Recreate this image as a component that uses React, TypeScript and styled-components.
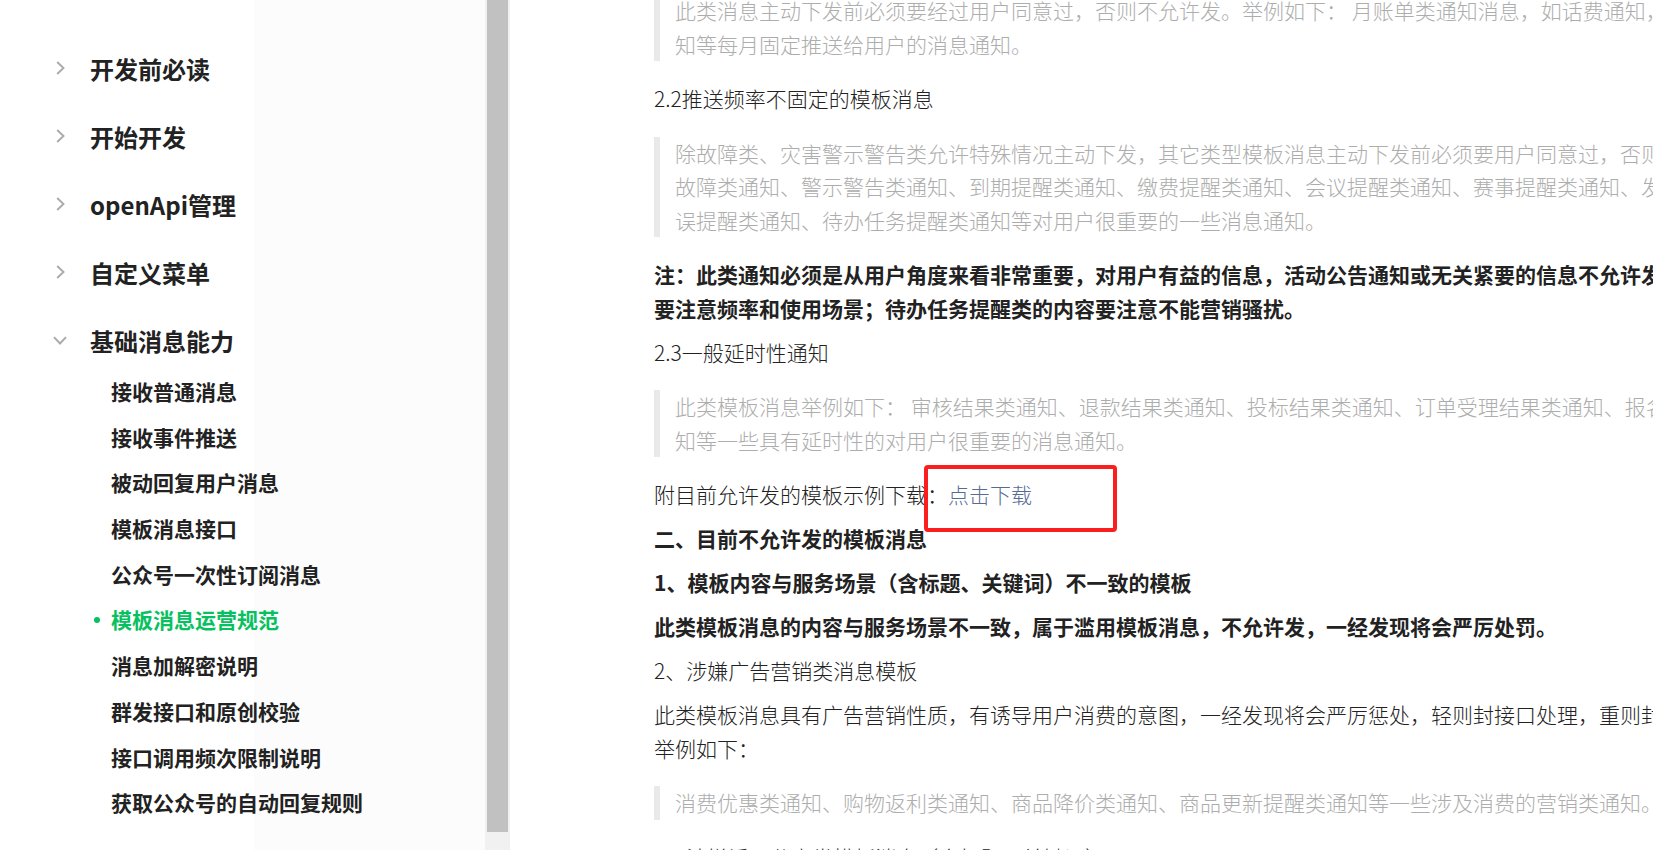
import React from "react";
import styled, { createGlobalStyle } from "styled-components";

const GlobalStyle = createGlobalStyle`
    html, body {
        margin: 0;
        padding: 0;
        height: 100%;
        overflow: hidden;
        background: #ffffff;
    }
    body {
        font-family: "Noto Sans CJK SC", "Noto Sans", "Liberation Sans", sans-serif;
        color: #222222;
    }
`;

interface MenuGroup {
    title: string;
    expanded?: boolean;
    children?: { title: string; active?: boolean }[];
}

const menu: MenuGroup[] = [
    { title: "开发前必读" },
    { title: "开始开发" },
    { title: "openApi管理" },
    { title: "自定义菜单" },
    {
        title: "基础消息能力",
        expanded: true,
        children: [
            { title: "接收普通消息" },
            { title: "接收事件推送" },
            { title: "被动回复用户消息" },
            { title: "模板消息接口" },
            { title: "公众号一次性订阅消息" },
            { title: "模板消息运营规范", active: true },
            { title: "消息加解密说明" },
            { title: "群发接口和原创校验" },
            { title: "接口调用频次限制说明" },
            { title: "获取公众号的自动回复规则" },
        ],
    },
];

const Chevron: React.FC<{ open?: boolean }> = ({ open }) =>
    open ? (
        <svg width="14" height="9" viewBox="0 0 14 9">
            <polyline points="1,1.2 7,7.5 13,1.2" fill="none" stroke="#aaaaaa" strokeWidth="1.9" />
        </svg>
    ) : (
        <svg width="9" height="14" viewBox="0 0 9 14">
            <polyline points="1.2,1 7.5,7 1.2,13" fill="none" stroke="#aaaaaa" strokeWidth="1.9" />
        </svg>
    );

const Sidebar: React.FC = () => (
    <SSidebar>
        <SNav>
            {menu.map(group => (
                <React.Fragment key={group.title}>
                    <STopRow>
                        <SIconBox>
                            <Chevron open={group.expanded} />
                        </SIconBox>
                        <STopTitle>{group.title}</STopTitle>
                    </STopRow>
                    {group.expanded && group.children && (
                        <SSubList>
                            {group.children.map(item => (
                                <SSubItem key={item.title} $active={item.active}>
                                    {item.title}
                                </SSubItem>
                            ))}
                        </SSubList>
                    )}
                </React.Fragment>
            ))}
        </SNav>
        <STrack>
            <SThumb />
        </STrack>
    </SSidebar>
);

const SSidebar = styled.aside`
    width: 510px;
    flex-shrink: 0;
    height: 100%;
    display: flex;
    background: linear-gradient(to right, #ffffff 254px, #fcfcfc 254px);
`;

const SNav = styled.nav`
    flex: 1;
    padding-top: 34px;
    overflow: hidden;
`;

const STopRow = styled.div`
    height: 68px;
    display: flex;
    align-items: center;
    padding-left: 53px;
`;

const SIconBox = styled.span`
    width: 14px;
    display: flex;
    justify-content: center;
    align-items: center;
    margin-right: 23px;
`;

const STopTitle = styled.span`
    font-size: 24px;
    font-weight: 700;
    color: #222222;
    white-space: nowrap;
`;

const SSubList = styled.ul`
    list-style: none;
    margin: -5px 0 0;
    padding: 0;
`;

const SSubItem = styled.li<{ $active?: boolean }>`
    position: relative;
    height: 45.7px;
    line-height: 45.7px;
    padding-left: 111px;
    font-size: 21px;
    font-weight: 700;
    white-space: nowrap;
    color: ${p => (p.$active ? "#07c160" : "#222222")};

    &::before {
        content: "";
        display: ${p => (p.$active ? "block" : "none")};
        position: absolute;
        left: 94px;
        top: 20px;
        width: 6px;
        height: 6px;
        border-radius: 50%;
        background: #07c160;
    }
`;

const STrack = styled.div`
    width: 25px;
    height: 100%;
    background: #f1f1f1;
    display: flex;
    justify-content: center;
`;

const SThumb = styled.div`
    width: 21px;
    height: 832px;
    background: #c1c1c1;
`;

const Article: React.FC = () => (
    <SMain>
        <SArticle>
            <SQuote>
                此类消息主动下发前必须要经过用户同意过，否则不允许发。举例如下： 月账单类通知消息，如话费通知，水电燃气账单通
                <br />
                知等每月固定推送给用户的消息通知。
            </SQuote>
            <SPara>2.2推送频率不固定的模板消息</SPara>
            <SQuote>
                除故障类、灾害警示警告类允许特殊情况主动下发，其它类型模板消息主动下发前必须要用户同意过，否则不允许发。举例如下：
                <br />
                故障类通知、警示警告类通知、到期提醒类通知、缴费提醒类通知、会议提醒类通知、赛事提醒类通知、发货提醒类通知、错
                <br />
                误提醒类通知、待办任务提醒类通知等对用户很重要的一些消息通知。
            </SQuote>
            <SPara $bold>
                注：此类通知必须是从用户角度来看非常重要，对用户有益的信息，活动公告通知或无关紧要的信息不允许发，到期提醒类通知
                <br />
                要注意频率和使用场景；待办任务提醒类的内容要注意不能营销骚扰。
            </SPara>
            <SPara>2.3一般延时性通知</SPara>
            <SQuote>
                此类模板消息举例如下： 审核结果类通知、退款结果类通知、投标结果类通知、订单受理结果类通知、报名结果类通知、审批结果类通
                <br />
                知等一些具有延时性的对用户很重要的消息通知。
            </SQuote>
            <SPara>
                附目前允许发的模板示例下载：<SLink>点击下载</SLink>
                <SMarkBox />
            </SPara>
            <SPara $bold>二、目前不允许发的模板消息</SPara>
            <SPara $bold>1、模板内容与服务场景（含标题、关键词）不一致的模板</SPara>
            <SPara $bold>此类模板消息的内容与服务场景不一致，属于滥用模板消息，不允许发，一经发现将会严厉处罚。</SPara>
            <SPara>2、涉嫌广告营销类消息模板</SPara>
            <SPara>
                此类模板消息具有广告营销性质，有诱导用户消费的意图，一经发现将会严厉惩处，轻则封接口处理，重则封号处理。
                <br />
                举例如下：
            </SPara>
            <SQuote>消费优惠类通知、购物返利类通知、商品降价类通知、商品更新提醒类通知等一些涉及消费的营销类通知。</SQuote>
            <SPara>3、涉嫌诱导分享类模板消息（含标题、关键词）</SPara>
        </SArticle>
    </SMain>
);

const SMain = styled.main`
    flex: 1;
    height: 100%;
    overflow: hidden;
    background: #ffffff;
`;

const SArticle = styled.article`
    display: flow-root;
    margin-top: -6px;
    padding-left: 144px;
    font-size: 21px;
    line-height: 33.5px;
    font-weight: 300;
    white-space: nowrap;

    & > :first-child {
        margin-top: 0;
    }
`;

const SPara = styled.p<{ $bold?: boolean }>`
    position: relative;
    margin: 0 0 10.5px;
    color: #222222;
    font-weight: ${p => (p.$bold ? 700 : 300)};
`;

const SQuote = styled.blockquote`
    margin: 21px 0;
    padding-left: 15px;
    border-left: 6px solid #e9e9e9;
    color: #adadad;
`;

const SLink = styled.a`
    color: #576b95;
    text-decoration: none;
    cursor: pointer;
`;

const SMarkBox = styled.span`
    position: absolute;
    left: 270px;
    top: -13px;
    width: 193px;
    height: 67px;
    box-sizing: border-box;
    border: 4px solid #fa1e1e;
    border-radius: 4px;
    pointer-events: none;
`;

const App: React.FC = () => (
    <>
        <GlobalStyle />
        <SLayout>
            <Sidebar />
            <Article />
        </SLayout>
    </>
);

const SLayout = styled.div`
    display: flex;
    width: 100%;
    height: 850px;
`;

export default App;
